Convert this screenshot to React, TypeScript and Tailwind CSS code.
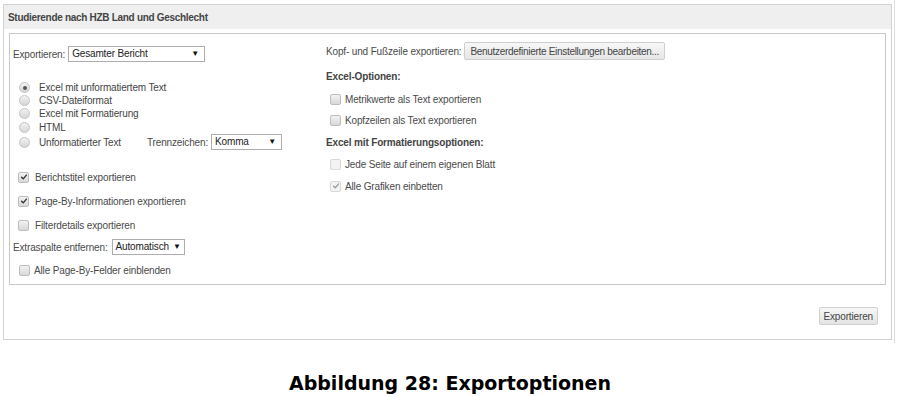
import React from 'react'

const ui = { fontFamily: '"Liberation Sans", Arial, sans-serif', letterSpacing: '-0.15px' }

function Radio({ checked }: { checked?: boolean }) {
  return (
    <span className="flex items-center justify-center w-[11px] h-[11px] rounded-full border border-[#c4c4c4] bg-gradient-to-b from-[#f2f2f2] to-[#d6d6d6]">
      {checked && <span className="w-[4px] h-[4px] rounded-full bg-[#555]" />}
    </span>
  )
}

function Check({ checked, disabled }: { checked?: boolean; disabled?: boolean }) {
  return (
    <span
      className={`flex items-center justify-center w-[11px] h-[11px] rounded-[2px] border ${
        disabled ? 'border-[#d8d8d8] bg-[#f3f3f3]' : 'border-[#bdbdbd] bg-gradient-to-b from-[#f2f2f2] to-[#d8d8d8]'
      }`}
    >
      {checked && (
        <svg viewBox="0 0 10 10" className="w-[8px] h-[8px]">
          <path
            d="M2 5.2 L4.1 7.3 L8 2.6"
            fill="none"
            stroke={disabled ? '#9a9a9a' : '#333'}
            strokeWidth="1.7"
            strokeLinecap="round"
            strokeLinejoin="round"
          />
        </svg>
      )}
    </span>
  )
}

function Select({ value, width, tight }: { value: string; width: string; tight?: boolean }) {
  return (
    <span
      className={`flex items-center h-[16px] border border-[#adadad] bg-white pl-[3px] pr-[5px] text-[#222] ${width} ${
        tight ? 'gap-[4px]' : 'justify-between'
      }`}
    >
      <span className="text-[10px] leading-none">{value}</span>
      <span className="text-[8px] leading-none text-[#111]">▼</span>
    </span>
  )
}

export default function App() {
  return (
    <div className="w-[900px] h-[397px] bg-white text-[#4a4a4a]" style={ui}>
      <div className="w-[895px] h-[343px] border-r border-[#dcdcdc] pt-[4px] pl-[3px]">
        <div className="w-[889px] h-[336px] border border-[#d2d2d2] flex flex-col">
          {/* header */}
          <div className="h-[24px] bg-[#efefef] flex items-center pl-[4px] text-[10px] font-bold text-[#444] tracking-[-0.3px]">
            Studierende nach HZB Land und Geschlecht
          </div>

          {/* options box */}
          <div className="mt-[4px] mx-[5px] h-[252px] border border-[#c9c9c9] flex text-[10px]">
            {/* left column */}
            <div className="w-[316px] pl-[3px] pt-[12px] flex flex-col">
              <div className="flex items-center gap-[3px] h-[16px]">
                <span>Exportieren:</span>
                <Select value="Gesamter Bericht" width="w-[137px]" />
              </div>

              <div className="mt-[19px] flex flex-col pl-[6px]">
                {[
                  { label: 'Excel mit unformatiertem Text', checked: true, h: 'h-[13px]' },
                  { label: 'CSV-Dateiformat', h: 'h-[13px]' },
                  { label: 'Excel mit Formatierung', h: 'h-[13px]' },
                  { label: 'HTML', h: 'h-[14px]' },
                ].map((r) => (
                  <div key={r.label} className={`flex items-center gap-[9px] ${r.h}`}>
                    <Radio checked={r.checked} />
                    <span className="text-[#444]">{r.label}</span>
                  </div>
                ))}
                <div className="flex items-center h-[16px]">
                  <div className="flex items-center gap-[9px] w-[128px]">
                    <Radio />
                    <span className="text-[#444]">Unformatierter Text</span>
                  </div>
                  <span className="mr-[3px]">Trennzeichen:</span>
                  <Select value="Komma" width="w-[71px]" />
                </div>
              </div>

              <div className="mt-[19px] flex flex-col gap-[8px] pl-[5px]">
                {[
                  { label: 'Berichtstitel exportieren', checked: true },
                  { label: 'Page-By-Informationen exportieren', checked: true },
                  { label: 'Filterdetails exportieren' },
                ].map((c) => (
                  <div key={c.label} className="flex items-center gap-[6px] h-[16px]">
                    <Check checked={c.checked} />
                    <span>{c.label}</span>
                  </div>
                ))}
              </div>

              <div className="mt-[6px] flex items-center gap-[4px] h-[16px]">
                <span>Extraspalte entfernen:</span>
                <Select value="Automatisch" width="w-[73px]" tight />
              </div>

              <div className="mt-[7px] flex items-center gap-[4px] h-[16px] pl-[6px]">
                <Check />
                <span>Alle Page-By-Felder einblenden</span>
              </div>
            </div>

            {/* right column */}
            <div className="flex-1 pt-[8px] flex flex-col">
              <div className="flex items-center gap-[3px] h-[18px]">
                <span>Kopf- und Fußzeile exportieren:</span>
                <span className="flex items-center h-[18px] px-[5px] rounded-[2px] border border-[#cfcfcf] bg-gradient-to-b from-[#f7f7f7] to-[#e6e6e6] text-[#444] tracking-[-0.3px]">
                  Benutzerdefinierte Einstellungen bearbeiten...
                </span>
              </div>

              <div className="mt-[9px] h-[14px] flex items-center font-bold text-[#444]">Excel-Optionen:</div>

              <div className="mt-[8px] flex items-center gap-[4px] h-[16px] pl-[4px]">
                <Check />
                <span>Metrikwerte als Text exportieren</span>
              </div>
              <div className="mt-[5px] flex items-center gap-[4px] h-[16px] pl-[4px]">
                <Check />
                <span>Kopfzeilen als Text exportieren</span>
              </div>

              <div className="mt-[7px] h-[14px] flex items-center font-bold text-[#444]">
                Excel mit Formatierungsoptionen:
              </div>

              <div className="mt-[7px] flex items-center gap-[4px] h-[16px] pl-[4px]">
                <Check disabled />
                <span>Jede Seite auf einem eigenen Blatt</span>
              </div>
              <div className="mt-[6px] flex items-center gap-[4px] h-[16px] pl-[4px]">
                <Check checked disabled />
                <span>Alle Grafiken einbetten</span>
              </div>
            </div>
          </div>

          {/* footer */}
          <div className="flex justify-end mt-[22px] pr-[13px]">
            <span className="flex items-center h-[18px] px-[4px] rounded-[2px] border border-[#d0d0d0] bg-gradient-to-b from-[#f7f7f7] to-[#e4e4e4] text-[10px] text-[#444]">
              Exportieren
            </span>
          </div>
        </div>
      </div>

      <div
        className="mt-[26px] text-center text-[19px] font-bold text-black"
        style={{ fontFamily: '"DejaVu Sans", Verdana, sans-serif', letterSpacing: '0px' }}
      >
        Abbildung 28: Exportoptionen
      </div>
    </div>
  )
}
